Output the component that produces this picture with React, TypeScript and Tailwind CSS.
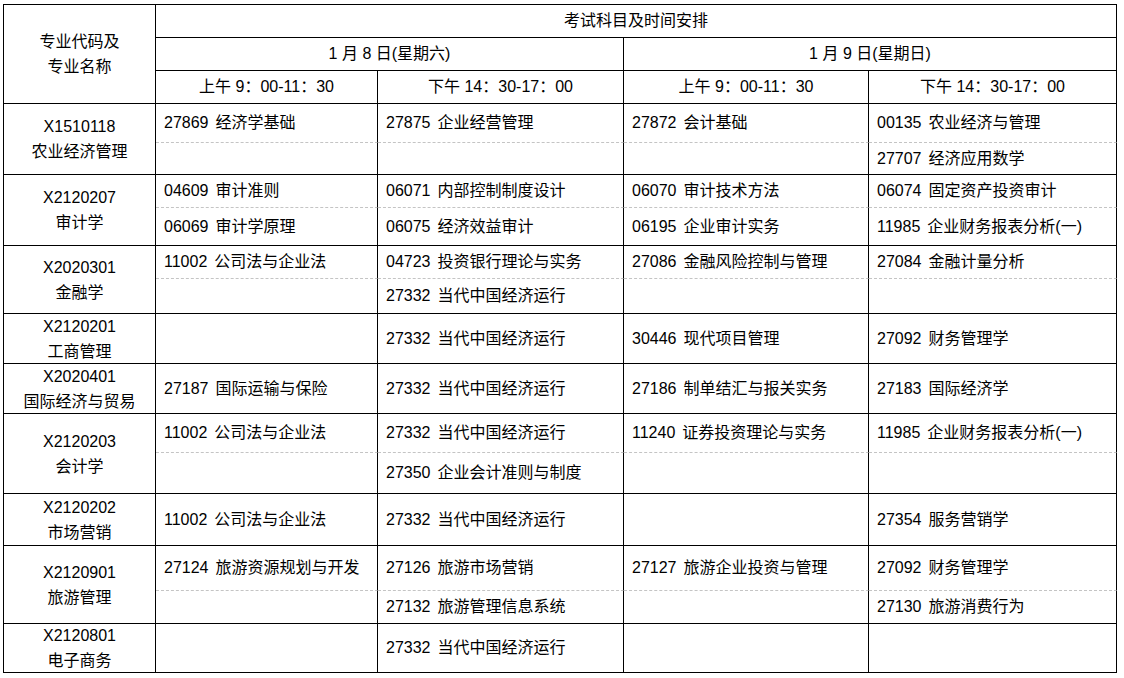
import React from 'react';

interface Major {
  code: string;
  name: string;
  rows: string[][];
}

// subject cells per major: [1月8日上午, 1月8日下午, 1月9日上午, 1月9日下午]
const majors: Major[] = [
  {
    code: 'X1510118',
    name: '农业经济管理',
    rows: [
      ['27869 经济学基础', '27875 企业经营管理', '27872 会计基础', '00135 农业经济与管理'],
      ['', '', '', '27707 经济应用数学']
    ]
  },
  {
    code: 'X2120207',
    name: '审计学',
    rows: [
      ['04609 审计准则', '06071 内部控制制度设计', '06070 审计技术方法', '06074 固定资产投资审计'],
      ['06069 审计学原理', '06075 经济效益审计', '06195 企业审计实务', '11985 企业财务报表分析(一)']
    ]
  },
  {
    code: 'X2020301',
    name: '金融学',
    rows: [
      ['11002 公司法与企业法', '04723 投资银行理论与实务', '27086 金融风险控制与管理', '27084 金融计量分析'],
      ['', '27332 当代中国经济运行', '', '']
    ]
  },
  {
    code: 'X2120201',
    name: '工商管理',
    rows: [['', '27332 当代中国经济运行', '30446 现代项目管理', '27092 财务管理学']]
  },
  {
    code: 'X2020401',
    name: '国际经济与贸易',
    rows: [['27187 国际运输与保险', '27332 当代中国经济运行', '27186 制单结汇与报关实务', '27183 国际经济学']]
  },
  {
    code: 'X2120203',
    name: '会计学',
    rows: [
      ['11002 公司法与企业法', '27332 当代中国经济运行', '11240 证券投资理论与实务', '11985 企业财务报表分析(一)'],
      ['', '27350 企业会计准则与制度', '', '']
    ]
  },
  {
    code: 'X2120202',
    name: '市场营销',
    rows: [['11002 公司法与企业法', '27332 当代中国经济运行', '', '27354 服务营销学']]
  },
  {
    code: 'X2120901',
    name: '旅游管理',
    rows: [
      ['27124 旅游资源规划与开发', '27126 旅游市场营销', '27127 旅游企业投资与管理', '27092 财务管理学'],
      ['', '27132 旅游管理信息系统', '', '27130 旅游消费行为']
    ]
  },
  {
    code: 'X2120801',
    name: '电子商务',
    rows: [['', '27332 当代中国经济运行', '', '']]
  }
];

const Subject: React.FC<{ text: string }> = ({ text }) => {
  if (!text) return null;
  const i = text.indexOf(' ');
  return (
    <span className="whitespace-nowrap">
      {text.slice(0, i)}
      <span className="ml-[7px]">{text.slice(i + 1)}</span>
    </span>
  );
};

const App: React.FC = () => {
  return (
    <div className="w-[1124px] h-[678px] bg-white text-black text-[16px] pl-[3px] pt-[4px] font-['Liberation_Sans','Noto_Sans_CJK_SC',sans-serif]">
      <div className="grid grid-cols-[152px_222px_246px_245px_248px] grid-rows-[33px_33px_33px_39px_32px_33px_38px_33px_35px_50px_50px_39px_41px_52px_45px_33px_49px] w-max border-l border-t border-black">
        {/* header */}
        <div className="row-span-3 flex flex-col items-center justify-center leading-[25px] border-r border-b border-black">
          <span>专业代码及</span>
          <span>专业名称</span>
        </div>
        <div className="col-span-4 flex items-center justify-center border-r border-b border-black">
          考试科目及时间安排
        </div>
        <div className="col-span-2 flex items-center justify-center border-r border-b border-black">
          1 月 8 日(星期六)
        </div>
        <div className="col-span-2 flex items-center justify-center border-r border-b border-black">
          1 月 9 日(星期日)
        </div>
        {['上午 9：00-11：30', '下午 14：30-17：00', '上午 9：00-11：30', '下午 14：30-17：00'].map((t, i) => (
          <div key={i} className="flex items-center justify-center border-r border-b border-black">
            {t}
          </div>
        ))}

        {/* majors */}
        {majors.map(m => (
          <React.Fragment key={m.code}>
            <div
              className={`${m.rows.length === 2 ? 'row-span-2' : ''} flex flex-col items-center justify-center leading-[25px] border-r border-b border-black`}
            >
              <span>{m.code}</span>
              <span>{m.name}</span>
            </div>
            {m.rows.map((row, ri) =>
              row.map((cell, ci) => (
                <div
                  key={`${ri}-${ci}`}
                  className={`flex items-center pl-[8px] border-r border-b border-black ${
                    ri === 0 && m.rows.length === 2 ? 'border-b-[#c4c4c4] [border-bottom-style:dashed]' : ''
                  }`}
                >
                  <Subject text={cell} />
                </div>
              ))
            )}
          </React.Fragment>
        ))}
      </div>
    </div>
  );
};

export default App;
